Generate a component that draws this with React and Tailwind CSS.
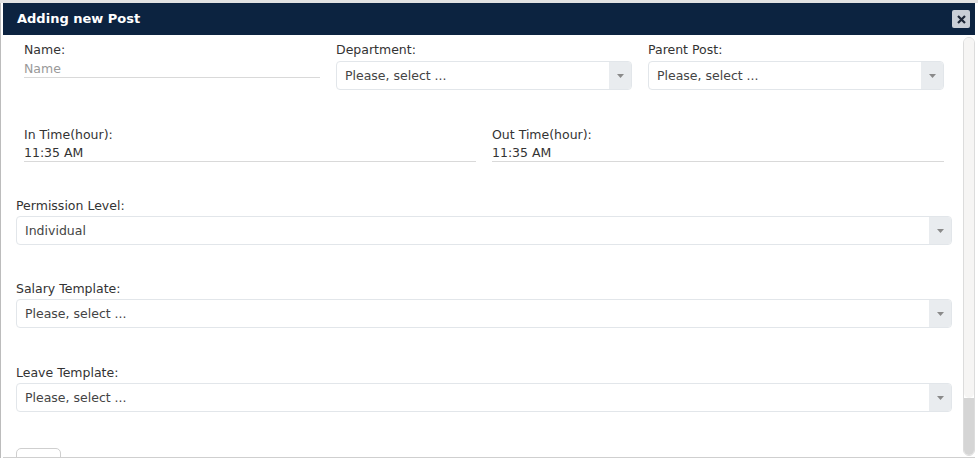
const font = { fontFamily: "'DejaVu Sans', 'Noto Sans', sans-serif" };

function Select({ value }) {
  return (
    <div className="flex h-[29px] w-full rounded-[4px] border border-[#e2e6ea] bg-white">
      <div className="flex flex-1 items-center pl-[8px] pt-[2px] text-[12.5px] text-[#444]">
        {value}
      </div>
      <div className="flex w-[22px] items-center justify-center rounded-r-[3px] bg-[#e9ecef]">
        <svg width="7" height="4" viewBox="0 0 7 4">
          <path d="M0 0 L7 0 L3.5 4 Z" fill="#8a8a8a" />
        </svg>
      </div>
    </div>
  );
}

function Label({ children }) {
  return (
    <div className="h-[18px] pt-[1px] text-[12.5px] leading-[18px] text-[#333]">
      {children}
    </div>
  );
}

function LineInput({ value, placeholder }) {
  return (
    <div
      className={
        "h-[19px] border-b border-[#d9d9d9] pt-[1px] text-[12.5px] leading-[18px] " +
        (placeholder ? "text-[#999]" : "text-[#333]")
      }
    >
      {placeholder || value}
    </div>
  );
}

export default function App() {
  return (
    <div
      className="h-[458px] w-[978px] overflow-hidden bg-[#e2e2e2] pt-[3px]"
      style={font}
    >
      <div className="flex h-[455px] flex-col border-l border-[#bcbcbc] bg-white pl-[2px] pr-[3px]">

        {/* HEADER */}

        <div className="flex h-[32px] items-center justify-between bg-[#0c2340] pl-[14px] pr-[5px]">
          <span className="text-[13px] font-bold text-white">
            Adding new Post
          </span>

          <button className="flex h-[18px] w-[18px] items-center justify-center rounded-[2px] bg-[#c9ced6]">
            <svg width="9" height="9" viewBox="0 0 9 9">
              <path
                d="M1 1 L8 8 M8 1 L1 8"
                stroke="#1d2636"
                strokeWidth="2.2"
              />
            </svg>
          </button>
        </div>

        {/* BODY */}

        <div className="flex flex-1 overflow-hidden border-b border-[#cfcfcf]">
          <div className="flex-1 pl-[13px] pr-[11px] pt-[5px]">

            <div className="grid grid-cols-3">
              <div className="px-[8px]">
                <Label>Name:</Label>
                <div className="pt-[1px]">
                  <LineInput placeholder="Name" />
                </div>
              </div>

              <div className="px-[8px]">
                <Label>Department:</Label>
                <div className="mt-[3px]">
                  <Select value="Please, select ..." />
                </div>
              </div>

              <div className="px-[8px]">
                <Label>Parent Post:</Label>
                <div className="mt-[3px]">
                  <Select value="Please, select ..." />
                </div>
              </div>
            </div>

            <div className="mt-[35px] grid grid-cols-2">
              <div className="px-[8px]">
                <Label>In Time(hour):</Label>
                <LineInput value="11:35 AM" />
              </div>

              <div className="px-[8px]">
                <Label>Out Time(hour):</Label>
                <LineInput value="11:35 AM" />
              </div>
            </div>

            <div className="mt-[34px]">
              <Label>Permission Level:</Label>
              <div className="mt-[2px]">
                <Select value="Individual" />
              </div>
            </div>

            <div className="mt-[34px]">
              <Label>Salary Template:</Label>
              <div className="mt-[2px]">
                <Select value="Please, select ..." />
              </div>
            </div>

            <div className="mt-[35px]">
              <Label>Leave Template:</Label>
              <div className="mt-[2px]">
                <Select value="Please, select ..." />
              </div>
            </div>

            <div className="mt-[36px] h-[20px] w-[45px] rounded-t-[5px] border border-[#cfcfcf] bg-white" />
          </div>

          {/* SCROLLBAR */}

          <div className="mb-[1px] mt-[2px] flex w-[12px] flex-col overflow-hidden rounded-full border border-[#dcdcdc]">
            <div className="flex-1 rounded-b-full bg-[#f6f5f4]" />
            <div className="h-[57px] bg-[#d5d5d5]" />
          </div>
        </div>
      </div>
    </div>
  );
}
